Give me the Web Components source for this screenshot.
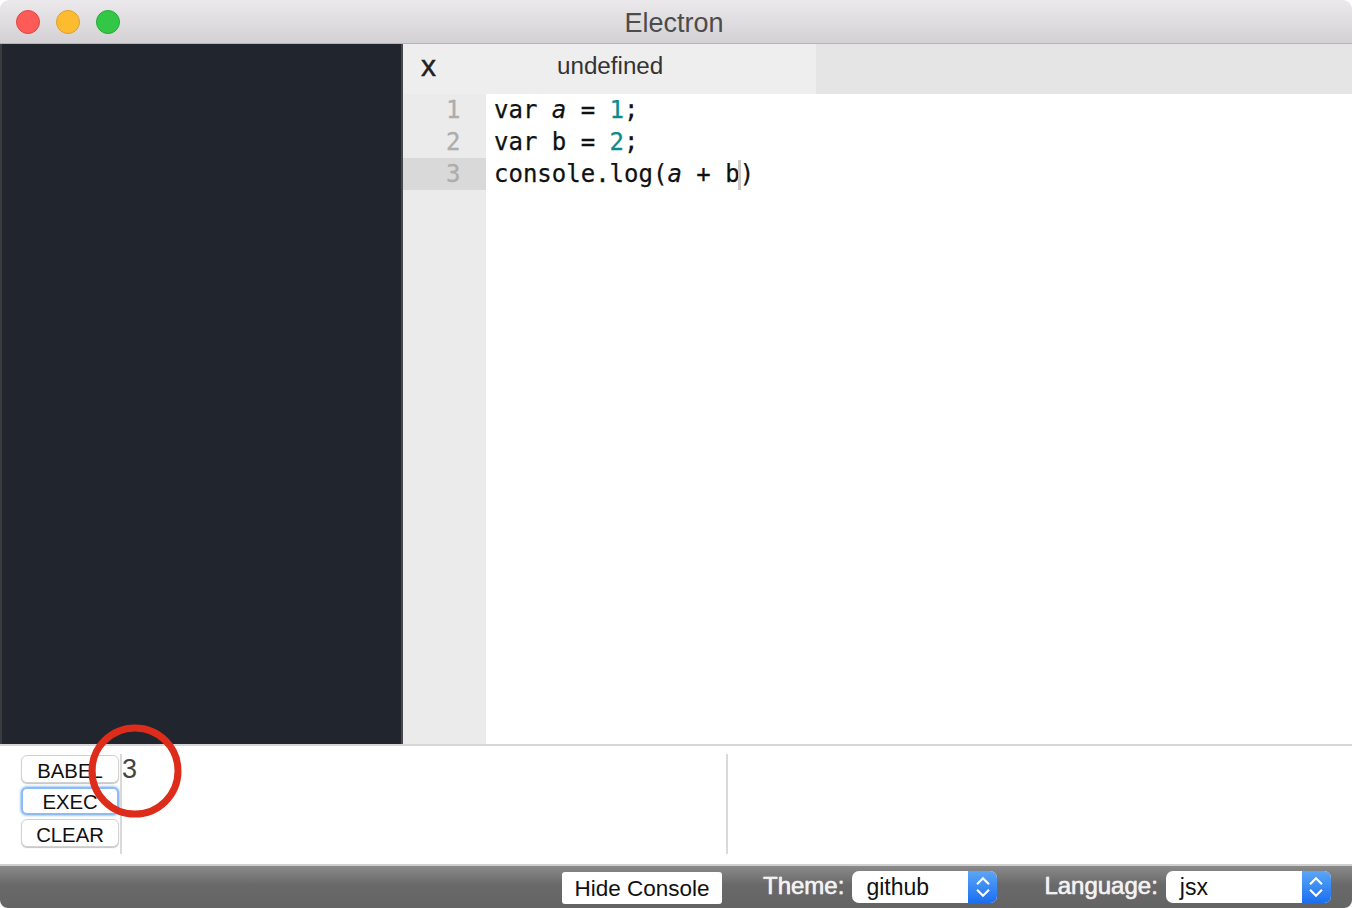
<!DOCTYPE html>
<html><head><meta charset="utf-8"><style>
html,body{margin:0;padding:0;background:#fff;height:100%;overflow:hidden}
body{font-family:"Liberation Sans",Arial,sans-serif}
</style></head><body>
<app-window>
  <title-bar slot="title">Electron</title-bar>
  <side-bar slot="side"></side-bar>
  <editor-pane slot="editor"></editor-pane>
  <console-pane slot="console"></console-pane>
  <status-bar slot="status"></status-bar>
</app-window>
<script>
function def(name,html,init){
  customElements.define(name,class extends HTMLElement{
    constructor(){super();this.attachShadow({mode:'open'}).innerHTML=html;}
    connectedCallback(){if(init)init(this);}
  });
}
def('app-window',`<style>
:host{display:flex;flex-direction:column;width:1352px;height:908px;overflow:hidden;border-radius:9px 9px 8px 8px}
.main{display:flex;flex:1;min-height:0}
</style><slot name="title"></slot><div class="main"><slot name="side"></slot><slot name="editor"></slot></div><slot name="console"></slot><slot name="status"></slot>`);
def('title-bar',`<style>
:host{display:flex;flex:0 0 44px;box-sizing:border-box;height:44px;align-items:center;justify-content:center;position:relative;background:linear-gradient(#ebe9eb,#d3d1d3);border-bottom:1px solid #b5b3b5;font:27px "Liberation Sans",sans-serif;color:#4d4c4d}
.lights{position:absolute;left:16px;top:10px;display:flex;gap:16px}
i{display:block;box-sizing:border-box;width:24px;height:24px;border-radius:50%;border:1px solid}
.r{background:#fc5b57;border-color:#df4744}.y{background:#fdbb2f;border-color:#de9f34}.g{background:#33c748;border-color:#27aa35}
span{position:relative;top:2px;left:-2px}
</style><div class="lights"><i class="r"></i><i class="y"></i><i class="g"></i></div><span><slot></slot></span>`);
def('side-bar',`<style>
:host{display:block;flex:0 0 403px;box-sizing:border-box;background:#21252d;border-left:2px solid #3a3c40;border-right:2px solid #48494b}
</style>`);
def('editor-pane',`<style>
:host{display:flex;flex-direction:column;flex:1;min-width:0;background:#fff}
.tabs{display:flex;height:50px;background:#e6e5e6;flex:none}
.tab{display:flex;width:413px;background:#eeeeee;color:#333;font:24.200px "Liberation Sans",sans-serif}
.x{width:52px;padding:6px 0 0 18px;box-sizing:border-box;font-size:30px;color:#222;line-height:32px;-webkit-text-stroke:.45px #222}
.name{padding-top:5px;margin-left:102px;line-height:34px;font-size:24.200px}
.body{display:flex;flex:1;min-height:0}
.gutter{width:83px;flex:none;background:#ebebeb;font:24px/32px "DejaVu Sans Mono",monospace;color:#adadad;-webkit-text-stroke:.3px #adadad}
.gutter div{height:32px;padding-left:43px;box-sizing:border-box}
.gutter .on{background:#d9d9d9}
.code{flex:1;font:24px/32px "DejaVu Sans Mono",monospace;color:#111;padding-left:8px;white-space:pre;-webkit-text-stroke:.25px #111}
.code div{height:32px}
em{font-style:italic}b{font-weight:400;color:#0a8c8c;-webkit-text-stroke:.25px #0a8c8c}
u{text-decoration:none;display:inline-block;width:0;height:30px;border-left:3px solid #c9c9c9;vertical-align:-8px;margin-left:-2px;margin-right:-1px}
</style><div class="tabs"><div class="tab"><div class="x">x</div><div class="name">undefined</div></div></div>
<div class="body"><div class="gutter"><div>1</div><div>2</div><div class="on">3</div></div>
<div class="code"><div>var <em>a</em> = <b>1</b>;</div><div>var b = <b>2</b>;</div><div>console.log(<em>a</em> + b<u></u>)</div></div></div>`);
def('console-pane',`<style>
:host{display:flex;flex:0 0 122px;box-sizing:border-box;height:122px;border-top:2px solid #d6d6d6;border-bottom:2px solid #cfcfcf;background:#fff;padding:8px 0 10px 21px;position:relative}
.btns{display:flex;flex-direction:column;gap:4px;width:98px;flex:none;padding-top:1px}
button{box-sizing:border-box;height:28px;width:98px;padding:3px 0 0;background:#fff;border:1px solid #d2d2d2;border-radius:6px;font:20.300px/24px "Liberation Sans",sans-serif;color:#111;box-shadow:0 1px 1px #c4c4c4;outline:none}
.f{border:2px solid #8cbcf2;box-shadow:0 0 2px 1px #a5cdf7;padding-top:1px}
.out{width:608px;flex:none;margin-left:1px;box-sizing:border-box;border-left:2px solid #d9d9d9;border-right:2px solid #d9d9d9;font:27px/30px "Liberation Sans",sans-serif;color:#444}
.mark{position:absolute;left:88px;top:-22px;width:94px;height:94px}
</style><div class="btns"><button>BABEL</button><button class="f">EXEC</button><button>CLEAR</button></div><div class="out">3</div>
<svg class="mark" viewBox="0 0 94 94"><circle cx="47" cy="47" r="43" fill="none" stroke="#dd2c1a" stroke-width="7"/></svg>`);
def('drop-select',`<style>
:host{display:flex;width:145px;height:32px;border-radius:7px;overflow:hidden;background:#fff;font:23px/32px "Liberation Sans",sans-serif;color:#111;margin-top:-3px}
.v{flex:1;padding-left:14px}
.a{width:29px;background:linear-gradient(#5ba6f6,#1a6ff0);display:flex;align-items:center;justify-content:center}
svg{width:18px;height:26px}
</style><div class="v"><slot></slot></div><div class="a"><svg viewBox="0 0 16 24"><path d="M2.500 9.500 8 4 13.500 9.500M2.500 14.500 8 20 13.500 14.500" fill="none" stroke="#fff" stroke-width="2"/></svg></div>`);
def('status-bar',`<style>
:host{display:flex;flex:0 0 42px;box-sizing:border-box;align-items:center;background:linear-gradient(#8b8a8b,#6a696a 45%,#656465);font:24px "Liberation Sans",sans-serif;color:#f2f2f2;padding:2px 0 0 562px}
button{box-sizing:border-box;width:160px;height:32px;padding:2px 0 0;border:0;border-radius:3px;background:#fff;font:22.500px "Liberation Sans",sans-serif;color:#111;margin-right:41px}
label{margin-right:8px;text-shadow:0 0 1px #f2f2f2;margin-top:-4px;-webkit-text-stroke:.3px #f2f2f2}
.l2{margin-left:47px}
.wide{width:165px}
</style><button>Hide Console</button><label>Theme:</label><drop-select>github</drop-select><label class="l2">Language:</label><drop-select class="wide">jsx</drop-select>`);
</script>
</body></html>
